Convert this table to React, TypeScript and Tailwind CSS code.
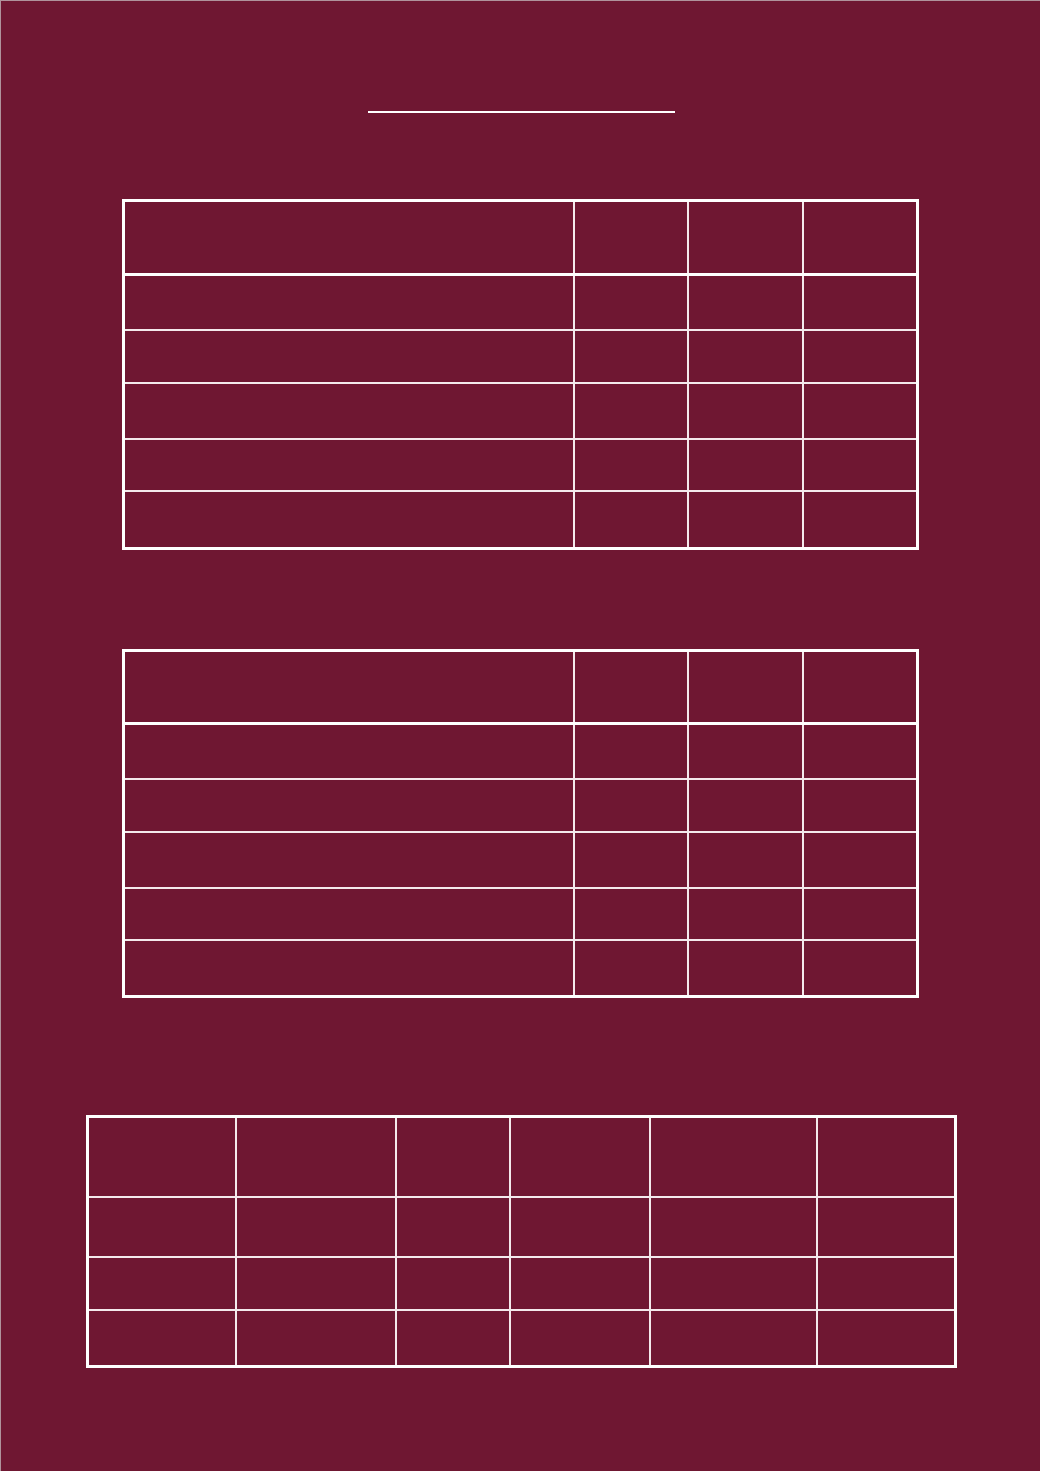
const wideRows = [
  ["h-[55px]", "h-[53px]", "h-[56px]", "h-[52px]", "h-[55px]"],
  ["h-[55px]", "h-[53px]", "h-[56px]", "h-[52px]", "h-[54px]"],
];

function FourColTable({ header, rows }: { header: string; rows: string[] }) {
  const cols = ["w-[450px]", "w-[114px]", "w-[115px]", "w-[112px]"];
  return (
    <div className="mx-auto w-[797px] border-[3px] border-white">
      <div className={`flex ${header} border-b-[3px] border-white`}>
        {cols.map((w, i) => (
          <div key={i} className={`${w} ${i < 3 ? "border-r-2 border-[#f4e9ec]" : ""}`} />
        ))}
      </div>
      {rows.map((h, r) => (
        <div key={r} className={`flex ${h} ${r < rows.length - 1 ? "border-b-2 border-[#f4e9ec]" : ""}`}>
          {cols.map((w, i) => (
            <div key={i} className={`${w} ${i < 3 ? "border-r-2 border-[#f4e9ec]" : ""}`} />
          ))}
        </div>
      ))}
    </div>
  );
}

function SixColTable() {
  const cols = ["w-[148px]", "w-[160px]", "w-[114px]", "w-[140px]", "w-[167px]", "w-[136px]"];
  const rows = ["h-[80px]", "h-[60px]", "h-[53px]", "h-[54px]"];
  return (
    <div className="mx-auto w-[871px] translate-x-px border-[3px] border-white">
      {rows.map((h, r) => (
        <div key={r} className={`flex ${h} ${r < rows.length - 1 ? "border-b-2 border-[#f4e9ec]" : ""}`}>
          {cols.map((w, i) => (
            <div key={i} className={`${w} ${i < 5 ? "border-r-2 border-[#f4e9ec]" : ""}`} />
          ))}
        </div>
      ))}
    </div>
  );
}

export default function App() {
  return (
    <div className="w-[1040px] h-[1471px] bg-[#6f1732] border-t border-l border-[#b0939c] overflow-hidden">
      <div className="pt-[110px]">
        <div className="mx-auto w-[307px] h-[2px] bg-white translate-x-[1px]" />
      </div>
      <div className="mt-[86px]">
        <FourColTable header="h-[74px]" rows={wideRows[0]} />
      </div>
      <div className="mt-[99px]">
        <FourColTable header="h-[73px]" rows={wideRows[1]} />
      </div>
      <div className="mt-[117px]">
        <SixColTable />
      </div>
    </div>
  );
}
